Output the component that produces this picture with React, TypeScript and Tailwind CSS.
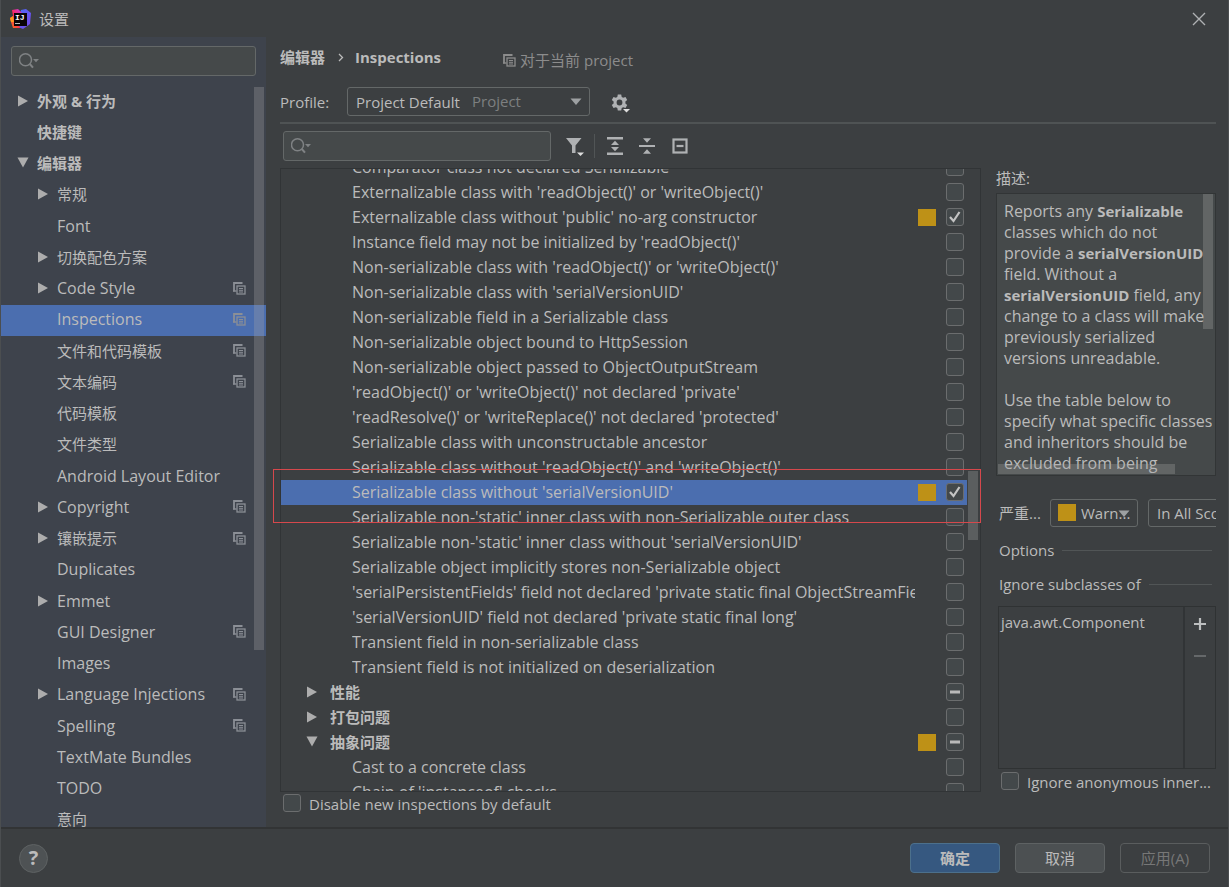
import { useEffect, useRef } from "react";
import clsx from "clsx";

type NavItem = {
  name: string;
  top?: boolean;
  cjk?: boolean;
  arrow?: "right" | "down";
  project?: boolean;
  active?: boolean;
};

type CheckState = "on" | "off" | "mixed";

type Inspection = {
  name: string;
  state?: CheckState;
  warn?: boolean;
  group?: "right" | "down";
  active?: boolean;
};

const navItems: NavItem[] = [
  { name: "外观 & 行为", top: true, cjk: true, arrow: "right" },
  { name: "快捷键", top: true, cjk: true },
  { name: "编辑器", top: true, cjk: true, arrow: "down" },
  { name: "常规", cjk: true, arrow: "right" },
  { name: "Font" },
  { name: "切换配色方案", cjk: true, arrow: "right" },
  { name: "Code Style", arrow: "right", project: true },
  { name: "Inspections", project: true, active: true },
  { name: "文件和代码模板", cjk: true, project: true },
  { name: "文本编码", cjk: true, project: true },
  { name: "代码模板", cjk: true },
  { name: "文件类型", cjk: true },
  { name: "Android Layout Editor" },
  { name: "Copyright", arrow: "right", project: true },
  { name: "镶嵌提示", cjk: true, arrow: "right", project: true },
  { name: "Duplicates" },
  { name: "Emmet", arrow: "right" },
  { name: "GUI Designer", project: true },
  { name: "Images" },
  { name: "Language Injections", arrow: "right", project: true },
  { name: "Spelling", project: true },
  { name: "TextMate Bundles" },
  { name: "TODO" },
  { name: "意向", cjk: true },
];

const inspections: Inspection[] = [
  { name: "Comparator class not declared Serializable" },
  { name: "Externalizable class with 'readObject()' or 'writeObject()'" },
  { name: "Externalizable class without 'public' no-arg constructor", state: "on", warn: true },
  { name: "Instance field may not be initialized by 'readObject()'" },
  { name: "Non-serializable class with 'readObject()' or 'writeObject()'" },
  { name: "Non-serializable class with 'serialVersionUID'" },
  { name: "Non-serializable field in a Serializable class" },
  { name: "Non-serializable object bound to HttpSession" },
  { name: "Non-serializable object passed to ObjectOutputStream" },
  { name: "'readObject()' or 'writeObject()' not declared 'private'" },
  { name: "'readResolve()' or 'writeReplace()' not declared 'protected'" },
  { name: "Serializable class with unconstructable ancestor" },
  { name: "Serializable class without 'readObject()' and 'writeObject()'" },
  { name: "Serializable class without 'serialVersionUID'", state: "on", warn: true, active: true },
  { name: "Serializable non-'static' inner class with non-Serializable outer class" },
  { name: "Serializable non-'static' inner class without 'serialVersionUID'" },
  { name: "Serializable object implicitly stores non-Serializable object" },
  { name: "'serialPersistentFields' field not declared 'private static final ObjectStreamField[]'" },
  { name: "'serialVersionUID' field not declared 'private static final long'" },
  { name: "Transient field in non-serializable class" },
  { name: "Transient field is not initialized on deserialization" },
  { name: "性能", group: "right", state: "mixed" },
  { name: "打包问题", group: "right" },
  { name: "抽象问题", group: "down", state: "mixed", warn: true },
  { name: "Cast to a concrete class" },
  { name: "Chain of 'instanceof' checks" },
];

function Logo() {
  return (
    <svg width="22" height="22" viewBox="0 0 22 22" aria-hidden="true">
      <defs>
        <linearGradient id="pink" x1="0" y1="1" x2="1" y2="0">
          <stop offset="0" stopColor="#f97a12" />
          <stop offset="0.5" stopColor="#fe2857" />
          <stop offset="1" stopColor="#c03af0" />
        </linearGradient>
        <linearGradient id="blue" x1="0" y1="0" x2="1" y2="1">
          <stop offset="0" stopColor="#4a6cf7" />
          <stop offset="1" stopColor="#7a45e6" />
        </linearGradient>
      </defs>
      <path d="M11 2 16 1 21 5 20 16 13 21 8 19Z" fill="url(#blue)" />
      <path d="M2 2 8 1 12 5 8 12 10 20 3 20 1 14 0 10 3 8Z" fill="url(#pink)" />
      <path d="M0 10 3 8 4 14 1 14Z" fill="#fc9a1a" />
      <rect x="4" y="5" width="13" height="13" fill="#0a0508" />
      <text x="5" y="12" fill="#fff" fontSize="8" fontWeight="700" fontFamily="Liberation Mono, monospace">
        IJ
      </text>
      <rect x="5" y="15" width="5" height="1" fill="#bbb" />
    </svg>
  );
}

function Arrow({ dir }: { dir: "right" | "down" }) {
  return (
    <svg width="12" height="12" viewBox="0 0 12 12" fill="#adadad" aria-hidden="true">
      {dir === "right" ? <path d="M1 0.5 11 6 1 11.5Z" /> : <path d="M0.5 0.5 11.5 0.5 6 10.5Z" />}
    </svg>
  );
}

function ProjectIcon({ className }: { className?: string }) {
  return (
    <svg width="13" height="13" viewBox="0 0 13 13" className={className} fill="none" stroke="currentColor" aria-hidden="true">
      <path d="M1 9.5V1H9.5" strokeWidth="1.8" />
      <path d="M0 9H3.5" strokeWidth="1.4" />
      <rect x="4" y="4" width="8" height="8" strokeWidth="1.3" />
      <path d="M6 6.5H10M6 8.3H10M6 10H10" strokeWidth="1" />
    </svg>
  );
}

function Caret({ className }: { className?: string }) {
  return (
    <svg width="12" height="8" viewBox="0 0 12 8" fill="#9da0a2" className={clsx("pointer-events-none", className)} aria-hidden="true">
      <path d="M0.5 0.5H11.5L6 7Z" />
    </svg>
  );
}

function SearchBox({ label, className }: { label: string; className?: string }) {
  return (
    <div className={clsx("relative", className)}>
      <svg width="22" height="16" viewBox="0 0 22 16" fill="none" className="pointer-events-none absolute left-2 top-[7px]" aria-hidden="true">
        <circle cx="6.5" cy="6.8" r="6" stroke="#7f8284" strokeWidth="1.5" />
        <path d="M10.8 11 14 14.7" stroke="#7f8284" strokeWidth="2" />
        <path d="M14 6H20L17 9.3Z" fill="#7f8284" />
      </svg>
      <input
        type="text"
        aria-label={label}
        className="block h-[30px] w-full rounded-[3px] border border-[#646868] bg-[#45494a] pl-8 pr-2 text-[#bbbbbb] outline-none"
      />
    </div>
  );
}

function Check({ id, state = "off" }: { id: string; state?: CheckState }) {
  const ref = useRef<HTMLInputElement>(null);

  useEffect(() => {
    if (ref.current) ref.current.indeterminate = state === "mixed";
  }, [state]);

  return (
    <span className="relative block size-[18px] shrink-0">
      <input
        ref={ref}
        id={id}
        type="checkbox"
        defaultChecked={state === "on"}
        className="peer block size-full appearance-none rounded-[3px] border border-[#6b6d6e] bg-[#43484a]"
      />
      <svg viewBox="0 0 18 18" fill="none" className="pointer-events-none absolute inset-0 hidden peer-checked:block" aria-hidden="true">
        <path d="M4 9 7.5 13 13.5 4" stroke="#c4c4c4" strokeWidth="2.2" />
      </svg>
      <svg viewBox="0 0 18 18" className="pointer-events-none absolute inset-0 hidden peer-indeterminate:block" aria-hidden="true">
        <rect x="4" y="7.5" width="10" height="3" fill="#b9b9b9" />
      </svg>
    </span>
  );
}

function Sidebar() {
  return (
    <aside className="flex w-[265px] shrink-0 flex-col bg-[#3e434c] pt-[9px]">
      <SearchBox label="搜索设置" className="ml-2.5 mr-2.5" />
      <nav className="relative mt-[10px] flex min-h-0 flex-1 flex-col overflow-hidden">
        <ul className="-mb-[9px] flex flex-1 flex-col">
          {navItems.map((item) => (
            <li key={item.name} className="flex min-h-0 flex-1">
              <a
                href="#"
                className={clsx(
                  "flex flex-1 items-center pb-0.5 pr-5",
                  item.top ? "pl-4 font-bold" : "pl-9",
                  item.cjk ? "text-[15px]" : "text-base",
                  item.active && "bg-[#4b6eaf]",
                )}
              >
                <span className="flex w-5 shrink-0">{item.arrow && <Arrow dir={item.arrow} />}</span>
                <span className="flex-1 whitespace-nowrap leading-5">{item.name}</span>
                {item.project && <ProjectIcon className="text-[#8b8f96]" />}
              </a>
            </li>
          ))}
        </ul>
        <div className="absolute right-0.5 top-px h-[76%] w-2.5 bg-[#a6a6a6]/30" />
      </nav>
    </aside>
  );
}

function Toolbar() {
  return (
    <div className="flex items-center pl-[3px]">
      <SearchBox label="搜索检查" className="w-[268px]" />
      <button type="button" aria-label="Filter" className="ml-[15px]">
        <svg width="20" height="20" viewBox="0 0 20 20" fill="#afb1b3">
          <path d="M0 2H15.5L9.5 9.5V17H6V9.5Z" />
          <path d="M11 16.5H18L14.5 20Z" fill="#dedede" />
        </svg>
      </button>
      <span className="ml-2 h-6 w-px bg-[#515556]" />
      <button type="button" aria-label="Expand all" className="ml-3">
        <svg width="16" height="18" viewBox="0 0 16 18" fill="#afb1b3">
          <path d="M0 0H16V2.4H0ZM0 15.6H16V18H0ZM8 3.8 12 8H4ZM4 10H12L8 14.2Z" />
        </svg>
      </button>
      <button type="button" aria-label="Collapse all" className="ml-4">
        <svg width="16" height="18" viewBox="0 0 16 18" fill="#afb1b3">
          <path d="M0 7.9H16V10.1H0ZM4 1.2H12L8 5.8ZM8 12.2 12 16.8H4Z" />
        </svg>
      </button>
      <button type="button" aria-label="Reset to empty" className="ml-[17px]">
        <svg width="16" height="16" viewBox="0 0 16 16" fill="none" stroke="#afb1b3" strokeWidth="2.2">
          <rect x="1.5" y="1.5" width="13" height="13" />
          <path d="M4.5 8H11.5" />
        </svg>
      </button>
    </div>
  );
}

function InspectionList() {
  return (
    <div className="relative mt-[7px] min-h-0 flex-1 border border-[#313436]">
      <div className="absolute inset-0 overflow-hidden">
        <ul className="-mt-3.5 mr-[13px]">
          {inspections.map((item, i) => (
            <li
              key={item.name}
              className={clsx("flex h-[25px] items-center pb-px pr-[3px]", item.active && "bg-[#4b6eaf]", item.group ? "pl-[25px]" : "pl-[71px]")}
            >
              {item.group && (
                <span className="w-6 shrink-0">
                  <Arrow dir={item.group} />
                </span>
              )}
              <label
                htmlFor={`inspection-${i}`}
                className={clsx(
                  "min-w-0 flex-1 overflow-hidden whitespace-nowrap leading-5",
                  item.group ? "text-[15px] font-bold" : "text-base",
                )}
              >
                {item.name}
              </label>
              <span className={clsx("ml-[3px] mr-2.5 h-[17px] w-[18px] shrink-0", item.warn && "bg-[#be9117]")} />
              <Check id={`inspection-${i}`} state={item.state} />
            </li>
          ))}
        </ul>
      </div>
      <div className="absolute right-0.5 top-[302px] h-[69px] w-2.5 bg-[#a6a6a6]/30" />
      <div className="pointer-events-none absolute -left-2 -right-px top-[300px] h-[54px] border border-[#d6484c]" />
    </div>
  );
}

function Details() {
  return (
    <section className="flex w-[220px] shrink-0 flex-col overflow-hidden pt-2">
      <h2 className="leading-5">描述:</h2>
      <div className="relative mt-[5px] h-[283px] overflow-hidden border border-[#323536] bg-[#45494a] pl-[7px] pt-[7px] text-base leading-[21px]">
        <p className="mb-[21px] whitespace-nowrap">
          Reports any <b className="text-[15px]">Serializable</b>
          <br />
          classes which do not
          <br />
          provide a <b className="text-[15px]">serialVersionUID</b>
          <br />
          field. Without a<br />
          <b className="text-[15px]">serialVersionUID</b> field, any
          <br />
          change to a class will make
          <br />
          previously serialized
          <br />
          versions unreadable.
        </p>
        <p className="whitespace-nowrap">
          Use the table below to
          <br />
          specify what specific classes
          <br />
          and inheritors should be
          <br />
          excluded from being
        </p>
        <div className="absolute right-0.5 top-0 h-[135px] w-2.5 bg-[#a6a6a6]/30" />
        <div className="absolute bottom-px left-px h-2.5 w-[177px] bg-[#a6a6a6]/30" />
      </div>

      <div className="ml-[3px] mt-[23px] flex items-center">
        <label htmlFor="severity" className="w-[51px] shrink-0">
          严重...
        </label>
        <div className="relative w-[88px] shrink-0">
          <span className="absolute left-2 top-[5px] h-[17px] w-[18px] bg-[#be9117]" />
          <select
            id="severity"
            className="block h-7 w-full appearance-none rounded-[3px] border border-[#646868] bg-[#3c3f41] pl-[30px] outline-none"
          >
            <option>Warn...</option>
          </select>
          <Caret className="absolute right-2 top-[11px]" />
        </div>
        <select
          aria-label="Scope"
          className="ml-2.5 h-7 w-[140px] shrink-0 appearance-none rounded-[3px] border border-[#646868] bg-[#3c3f41] pl-2 outline-none"
        >
          <option>In All Scopes</option>
        </select>
      </div>

      <div className="ml-[3px] mr-1 mt-[13px] flex items-center gap-2 leading-5">
        <h3>Options</h3>
        <span className="h-px flex-1 bg-[#515556]" />
      </div>
      <div className="ml-[3px] mr-1 mt-3.5 flex items-center gap-2 leading-5">
        <h3>Ignore subclasses of</h3>
        <span className="h-px flex-1 bg-[#515556]" />
      </div>

      <div className="ml-0.5 mt-3 flex min-h-0 flex-1 border border-[#2f3233]">
        <ul className="flex-1 pl-0.5 pt-[5px] leading-5">
          <li>java.awt.Component</li>
        </ul>
        <div className="flex w-8 flex-col items-center gap-[18px] border-l-2 border-[#313436] pt-2.5">
          <button type="button" aria-label="Add">
            <svg width="14" height="14" viewBox="0 0 14 14" stroke="#bdbfc0" strokeWidth="2.2">
              <path d="M7 1V13M1 7H13" />
            </svg>
          </button>
          <button type="button" aria-label="Remove" disabled>
            <svg width="14" height="14" viewBox="0 0 14 14" stroke="#65686a" strokeWidth="2">
              <path d="M1 7H13" />
            </svg>
          </button>
        </div>
      </div>

      <div className="mb-[35px] ml-[5px] mt-[3px] flex gap-2">
        <Check id="ignore-anonymous" />
        <label htmlFor="ignore-anonymous" className="whitespace-nowrap leading-5">
          Ignore anonymous inner...
        </label>
      </div>
    </section>
  );
}

export default function App() {
  return (
    <div className="flex h-screen flex-col overflow-hidden border-x border-[#4b4e50] bg-[#3c3f41] font-['Open_Sans','Noto_Sans_CJK_SC',sans-serif] text-[15px] leading-5 text-[#bbbbbb]">
      <header className="flex h-[37px] shrink-0 items-center pl-[9px] pr-[22px] pt-px">
        <Logo />
        <h1 className="ml-[7px] flex-1">设置</h1>
        <button type="button" aria-label="关闭">
          <svg width="14" height="14" viewBox="0 0 14 14" stroke="#afb1b3" strokeWidth="1.4">
            <path d="M1 1 13 13M13 1 1 13" />
          </svg>
        </button>
      </header>

      <div className="flex min-h-0 flex-1">
        <Sidebar />

        <main className="flex min-w-0 flex-1 flex-col pl-3.5 pr-3 pt-[7px]">
          <div className="flex items-center">
            <b>编辑器</b>
            <svg width="6" height="9" viewBox="0 0 6 9" fill="none" stroke="#bbbbbb" strokeWidth="1.3" className="ml-[13px] mr-[11px]" aria-hidden="true">
              <path d="M1 1 4.5 4.5 1 8" />
            </svg>
            <b>Inspections</b>
            <span className="ml-[62px] flex items-center gap-1 pt-1.5 text-[#8c8c8c]">
              <ProjectIcon />
              <span>对于当前 project</span>
            </span>
          </div>

          <div className="mt-[17px] flex items-center">
            <label htmlFor="profile" className="w-[67px]">
              Profile:
            </label>
            <div className="relative w-[243px]">
              <select
                id="profile"
                className="block h-[29px] w-full appearance-none rounded-[3px] border border-[#646868] bg-[#3c3f41] pl-2 outline-none"
              >
                <option>Project Default</option>
              </select>
              <span className="pointer-events-none absolute left-[125px] top-1 text-[#7d7f80]">Project</span>
              <Caret className="absolute right-2 top-[11px]" />
            </div>
            <button type="button" aria-label="Profile actions" className="ml-[21px] pt-1">
              <svg width="20" height="20" viewBox="0 0 20 20" fill="#afb1b3">
                <path
                  fillRule="evenodd"
                  d="M6.8 0.5H10.2L10.7 2.9 12.2 3.8 14.5 3 16.2 6 14.4 7.6V9.4L16.2 11 14.5 14 12.2 13.2 10.7 14.1 10.2 16.5H6.8L6.3 14.1 4.8 13.2 2.5 14 0.8 11 2.6 9.4V7.6L0.8 6 2.5 3 4.8 3.8 6.3 2.9ZM8.5 5.6A2.9 2.9 0 1 0 8.5 11.4 2.9 2.9 0 1 0 8.5 5.6Z"
                />
                <path d="M12 15H19L15.5 18.5Z" fill="#dedede" />
              </svg>
            </button>
          </div>

          <hr className="mt-1.5 border-t-2 border-[#4f5354]" />

          <div className="flex min-h-0 flex-1">
            <div className="flex min-w-0 flex-1 flex-col pt-[7px]">
              <Toolbar />
              <InspectionList />
              <div className="mb-[13px] mt-0.5 flex gap-2 pl-[3px]">
                <Check id="disable-new" />
                <label htmlFor="disable-new" className="leading-5">
                  Disable new inspections by default
                </label>
              </div>
            </div>
            <div className="ml-[15px] flex pt-9">
              <Details />
            </div>
          </div>
        </main>
      </div>

      <footer className="flex h-[60px] shrink-0 items-center gap-[15px] border-t-2 border-[#323435] pl-[18px] pr-[18px]">
        <button
          type="button"
          aria-label="帮助"
          className="mr-auto size-[29px] rounded-full border border-[#5e6263] bg-[#4e5254] text-xl font-bold leading-5"
        >
          ?
        </button>
        <button type="button" className="h-[30px] w-[90px] rounded-[4px] border border-[#4c708c] bg-[#365880] font-bold">
          确定
        </button>
        <button type="button" className="h-[30px] w-[90px] rounded-[4px] border border-[#5e6263] bg-[#4c5052]">
          取消
        </button>
        <button type="button" disabled className="h-[30px] w-[90px] rounded-[4px] border border-[#5a5d5e] text-[#777777]">
          应用(A)
        </button>
      </footer>
    </div>
  );
}
